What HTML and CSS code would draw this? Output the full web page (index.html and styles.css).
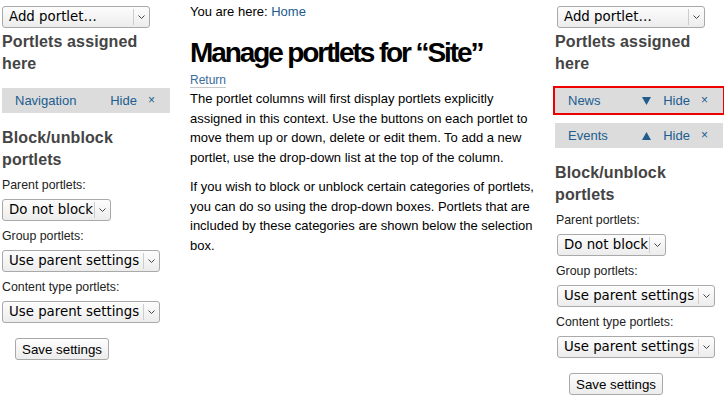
FILE: index.html
```html
<!DOCTYPE html>
<html lang="en">
<head>
<meta charset="utf-8">
<title>Manage portlets for “Site”</title>
<link rel="stylesheet" href="styles.css">
</head>
<body>
<div class="page">
  <aside class="col col-left">
    <div class="sel sel-add"><select><option>Add portlet…</option></select><span class="arrow"><svg width="7" height="4" viewBox="0 0 7 4"><path d="M0.5 0.5 L3.5 3.5 L6.5 0.5" fill="none" stroke="#444" stroke-width="1"/></svg></span></div>
    <h2 class="col-title">Portlets assigned here</h2>
    <div class="portlets">
      <div class="portlet"><a class="name" href="#">Navigation</a><span class="controls"><a href="#">Hide</a><a class="del" href="#">×</a></span></div>
    </div>
    <h2 class="col-title block-title">Block/unblock portlets</h2>
    <form class="block-form">
      <div class="field"><label>Parent portlets:</label><div class="sel sel-short"><select><option>Do not block</option></select><span class="arrow"><svg width="7" height="4" viewBox="0 0 7 4"><path d="M0.5 0.5 L3.5 3.5 L6.5 0.5" fill="none" stroke="#444" stroke-width="1"/></svg></span></div></div>
      <div class="field"><label>Group portlets:</label><div class="sel sel-long"><select><option>Use parent settings</option></select><span class="arrow"><svg width="7" height="4" viewBox="0 0 7 4"><path d="M0.5 0.5 L3.5 3.5 L6.5 0.5" fill="none" stroke="#444" stroke-width="1"/></svg></span></div></div>
      <div class="field"><label>Content type portlets:</label><div class="sel sel-long"><select><option>Use parent settings</option></select><span class="arrow"><svg width="7" height="4" viewBox="0 0 7 4"><path d="M0.5 0.5 L3.5 3.5 L6.5 0.5" fill="none" stroke="#444" stroke-width="1"/></svg></span></div></div>
      <button type="button" class="save">Save settings</button>
    </form>
  </aside>

  <main class="content">
    <div class="breadcrumbs">You are here: <a href="#">Home</a></div>
    <h1 class="title">Manage portlets for “Site”</h1>
    <div class="link-parent"><a href="#">Return</a></div>
    <p>The portlet columns will first display portlets explicitly assigned in this context. Use the buttons on each portlet to move them up or down, delete or edit them. To add a new portlet, use the drop-down list at the top of the column.</p>
    <p>If you wish to block or unblock certain categories of portlets, you can do so using the drop-down boxes. Portlets that are included by these categories are shown below the selection box.</p>
  </main>

  <aside class="col col-right">
    <div class="sel sel-add"><select><option>Add portlet…</option></select><span class="arrow"><svg width="7" height="4" viewBox="0 0 7 4"><path d="M0.5 0.5 L3.5 3.5 L6.5 0.5" fill="none" stroke="#444" stroke-width="1"/></svg></span></div>
    <h2 class="col-title">Portlets assigned here</h2>
    <div class="portlets">
      <div class="portlet highlighted"><a class="name" href="#">News</a><span class="controls"><a class="move" href="#"><svg width="9" height="8" viewBox="0 0 9 8"><path d="M0 0 H9 L4.5 8 Z" fill="#205c90"/></svg></a><a href="#">Hide</a><a class="del" href="#">×</a></span></div>
      <div class="portlet"><a class="name" href="#">Events</a><span class="controls"><a class="move" href="#"><svg width="9" height="8" viewBox="0 0 9 8"><path d="M0 8 H9 L4.5 0 Z" fill="#205c90"/></svg></a><a href="#">Hide</a><a class="del" href="#">×</a></span></div>
    </div>
    <h2 class="col-title block-title">Block/unblock portlets</h2>
    <form class="block-form">
      <div class="field"><label>Parent portlets:</label><div class="sel sel-short"><select><option>Do not block</option></select><span class="arrow"><svg width="7" height="4" viewBox="0 0 7 4"><path d="M0.5 0.5 L3.5 3.5 L6.5 0.5" fill="none" stroke="#444" stroke-width="1"/></svg></span></div></div>
      <div class="field"><label>Group portlets:</label><div class="sel sel-long"><select><option>Use parent settings</option></select><span class="arrow"><svg width="7" height="4" viewBox="0 0 7 4"><path d="M0.5 0.5 L3.5 3.5 L6.5 0.5" fill="none" stroke="#444" stroke-width="1"/></svg></span></div></div>
      <div class="field"><label>Content type portlets:</label><div class="sel sel-long"><select><option>Use parent settings</option></select><span class="arrow"><svg width="7" height="4" viewBox="0 0 7 4"><path d="M0.5 0.5 L3.5 3.5 L6.5 0.5" fill="none" stroke="#444" stroke-width="1"/></svg></span></div></div>
      <button type="button" class="save">Save settings</button>
    </form>
  </aside>
</div>
</body>
</html>
```

FILE: styles.css
```css
* { box-sizing: border-box; }

body {
  margin: 0;
  font: 13px/19.5px "Liberation Sans", Arial, sans-serif;
  color: #000;
  background: #fff;
}

a { color: #205c90; text-decoration: none; }

.page {
  display: grid;
  grid-template-columns: 168px 345px 168px;
  column-gap: 20px;
  padding-left: 2px;
}

.col { padding-top: 6px; }

/* select boxes */
.sel {
  display: inline-flex;
  align-items: stretch;
  height: 22px;
  border: 1px solid #a9a9a9;
  border-radius: 3px;
  background: linear-gradient(#fdfdfd, #ececec);
  vertical-align: top;
}
.sel select {
  -webkit-appearance: none;
  appearance: none;
  border: 0;
  margin: 0;
  padding: 0 0 0 6px;
  height: 20px;
  background: transparent;
  font: 13.33px/20px "DejaVu Sans", sans-serif;
  color: #000;
  outline: none;
}
.sel-add select { width: 130px; }
.sel-short select { width: 91px; }
.sel-long select { width: 140px; }
.arrow {
  width: 16px;
  margin: 2px 0;
  border-left: 1px solid #cdcdcd;
  display: flex;
  align-items: center;
  justify-content: center;
}
.col-right .sel { margin-left: 2px; }

/* column headings */
.col-title {
  margin: 3px 0 13px;
  font-size: 16px;
  line-height: 22px;
  font-weight: bold;
  letter-spacing: 0.12px;
  color: #444;
}
.block-title { margin-bottom: 4px; }

/* portlet bars */
.portlets {
  display: flex;
  flex-direction: column;
  gap: 10px;
  margin-bottom: 14px;
}
.portlet {
  display: flex;
  align-items: center;
  height: 25px;
  padding: 0 15px 0 13px;
  background: #dcdcdc;
}
.portlet .name { flex: 1; }
.controls {
  display: flex;
  align-items: center;
  gap: 11px;
}
.controls .move { display: flex; margin-right: 1px; }
.controls .del { font-size: 12px; }
.highlighted { outline: 2px solid #ee0000; }

/* block form */
.field { margin-bottom: 5px; }
.field label {
  display: block;
  font-size: 12.35px;
  line-height: 20px;
  margin-bottom: 4px;
  color: #222;
}
.col-right .field label { padding-left: 1px; }
.save {
  margin: 10px 0 0 13px;
  height: 22px;
  padding: 0 6px;
  border: 1px solid #a9a9a9;
  border-radius: 3px;
  background: linear-gradient(#fdfdfd, #ececec);
  font: 13.33px "Liberation Sans", Arial, sans-serif;
  color: #000;
}
.col-right .save { margin-left: 14px; }

/* main content */
.breadcrumbs {
  margin-top: 2px;
  line-height: 20px;
}
.title {
  margin: 14px 0 1px;
  font-size: 28px;
  line-height: 34px;
  font-weight: bold;
  letter-spacing: -2.1px;
}
.link-parent {
  font-size: 12px;
  line-height: 18px;
}
.link-parent a {
  color: #3a6b9a;
  border-bottom: 1px solid #c8c8c8;
}
.content p { margin: 0 0 10px; }
```
